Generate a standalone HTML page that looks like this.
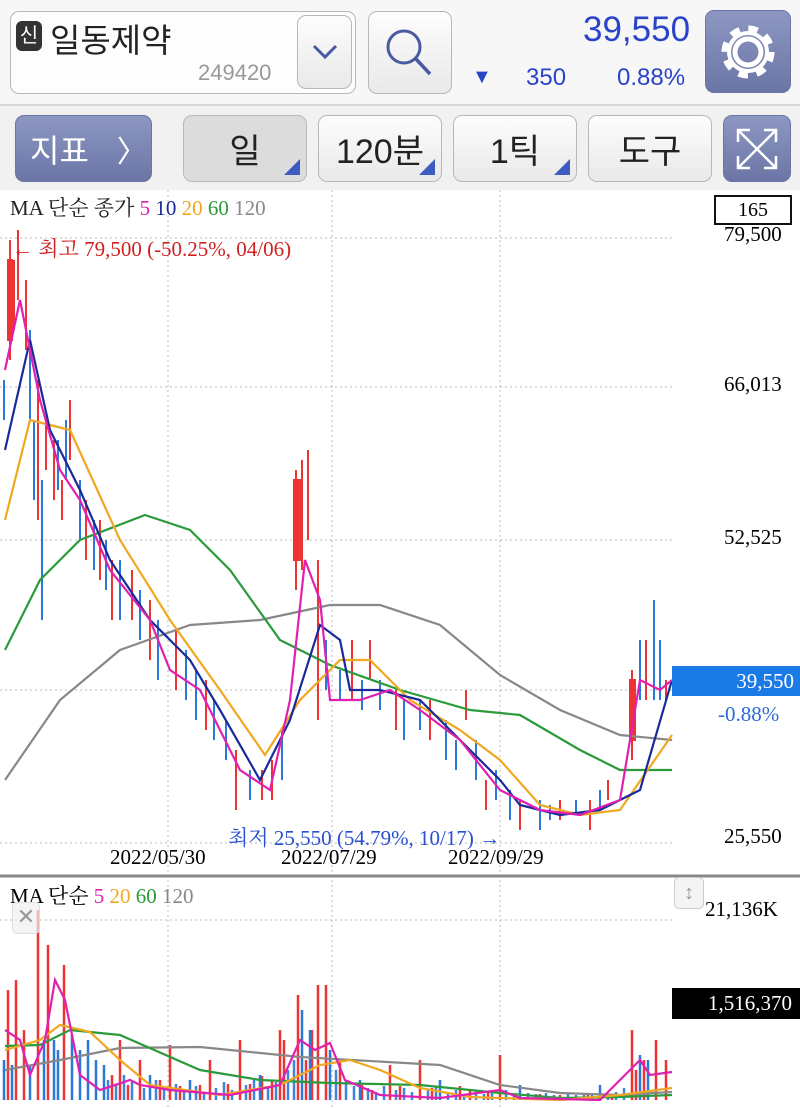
<!DOCTYPE html><html><head><meta charset="utf-8"><style>
body{margin:0;width:800px;height:1108px;overflow:hidden;background:#fff;font-family:"Liberation Sans","Noto Sans CJK KR",sans-serif;position:relative}
.a{position:absolute}
.btn{position:absolute;border:1px solid #b8b8b8;border-radius:9px;background:linear-gradient(#fdfdfd,#e9e9e9);box-sizing:border-box;display:flex;align-items:center;justify-content:center;font-size:34px;color:#222}
.blue{background:linear-gradient(#8d97c2,#6b76a6);border-color:#6b76a6;color:#fff}
.tri{position:absolute;right:6px;bottom:6px;width:0;height:0;border-left:16px solid transparent;border-bottom:16px solid #3d5cc0}
.s{font-family:"Liberation Serif","Noto Serif CJK SC",serif}
</style></head><body>
<div class="a" style="left:0;top:0;width:800px;height:104px;background:#f7f7f7;border-bottom:2px solid #d8d8d8"></div>
<div class="a" style="left:0;top:106px;width:800px;height:84px;background:#f1f1f1"></div>
<div class="btn" style="left:10px;top:11px;width:346px;height:83px;background:#fdfdfd"></div>
<div class="a" style="left:16px;top:21px;width:26px;height:30px;background:#333;border-radius:6px;color:#fff;font-size:20px;text-align:center;line-height:30px">신</div>
<div class="a" style="left:50px;top:14px;font-size:33px;color:#222">일동제약</div>
<div class="a" style="left:198px;top:60px;font-size:22px;color:#999">249420</div>
<div class="btn" style="left:297px;top:15px;width:55px;height:74px"><svg width="30" height="20"><path d="M4 4 L15 15 L26 4" stroke="#4a5aa0" stroke-width="3" fill="none"/></svg></div>
<div class="btn" style="left:368px;top:11px;width:84px;height:83px"><svg width="60" height="60"><circle cx="24" cy="24" r="16" stroke="#4a5aa0" stroke-width="3" fill="none"/><path d="M36 36 L50 51" stroke="#4a5aa0" stroke-width="3.5"/></svg></div>
<div class="a" style="left:583px;top:10px;font-size:35px;color:#2a44c8">39,550</div>
<div class="a" style="left:472px;top:66px;font-size:20px;color:#2a44c8">▼</div>
<div class="a" style="left:526px;top:64px;font-size:24px;color:#2a44c8">350</div>
<div class="a" style="left:617px;top:64px;font-size:24px;color:#2a44c8">0.88%</div>
<div class="btn blue" style="left:705px;top:10px;width:86px;height:83px"><svg width="70" height="70" viewBox="0 0 70 70"><g fill="none" stroke="#fff" stroke-width="5"><circle cx="35" cy="35" r="13"/><circle cx="35" cy="35" r="22" stroke-dasharray="9 8.3" stroke-width="9"/></g><circle cx="35" cy="35" r="19" fill="none" stroke="#fff" stroke-width="4"/></svg></div>
<div class="btn blue" style="left:15px;top:115px;width:137px;height:67px;font-size:32px;justify-content:flex-start;padding-left:14px">지표 <span style="margin-left:28px;font-size:30px">〉</span></div>
<div class="btn" style="left:183px;top:115px;width:124px;height:67px;background:#dcdcdc">일<div class="tri"></div></div>
<div class="btn" style="left:318px;top:115px;width:124px;height:67px">120분<div class="tri"></div></div>
<div class="btn" style="left:453px;top:115px;width:124px;height:67px">1틱<div class="tri"></div></div>
<div class="btn" style="left:588px;top:115px;width:124px;height:67px">도구</div>
<div class="btn blue" style="left:723px;top:115px;width:68px;height:67px"><svg width="50" height="50"><g stroke="#fff" stroke-width="2.5" fill="none"><path d="M6 6L44 44M44 6L6 44M6 18V6H18M32 6H44V18M6 32V44H18M44 32V44H32"/></g></svg></div>

<svg class="a" style="left:0;top:190px" width="800" height="918">
<g stroke="#bbb" stroke-dasharray="2 3" stroke-width="1">
<line x1="168" y1="0" x2="168" y2="918"/><line x1="332" y1="0" x2="332" y2="918"/><line x1="500" y1="0" x2="500" y2="918"/>
<line x1="0" y1="48" x2="672" y2="48"/><line x1="0" y1="197" x2="672" y2="197"/><line x1="0" y1="350" x2="672" y2="350"/><line x1="0" y1="500" x2="672" y2="500"/><line x1="0" y1="653" x2="672" y2="653"/><line x1="0" y1="730" x2="672" y2="730"/>
</g>
<line x1="0" y1="686" x2="800" y2="686" stroke="#888" stroke-width="3"/>
<g transform="translate(0,-190)" stroke-width="2">
<g stroke="#e33">
<path d="M10 240V360M14 260V330M18 230V300M26 280V350M38 380V520M46 420V470M54 440V500M62 480V520M70 400V460M86 500V560M100 520V580M112 560V620M132 570V620M150 600V660M176 630V690M206 680V730M236 750V810M262 770V800M272 760V800M296 470V590M302 460V570M308 450V540M318 560V720M352 640V700M370 640V680M396 690V730M430 700V740M466 690V720M486 780V810M520 800V830M560 800V820M590 800V830M608 780V800M632 670V760M646 640V700M666 680V700"/>
<rect x="8" y="260" width="4" height="80" fill="#e33"/><rect x="294" y="480" width="6" height="80" fill="#e33"/><rect x="630" y="680" width="5" height="60" fill="#e33"/>
</g>
<g stroke="#2a78d8">
<path d="M4 380V420M30 330V420M34 420V500M42 480V620M58 440V490M66 420V480M80 480V540M94 520V570M106 540V590M120 560V620M140 590V640M158 620V680M186 650V700M196 670V720M214 700V740M226 720V760M250 770V800M282 730V780M326 640V690M340 670V700M362 680V710M380 680V710M404 700V740M420 700V730M446 720V760M456 740V770M476 740V780M496 770V800M510 790V820M540 800V830M550 805V820M576 800V815M600 790V810M640 640V700M654 600V700M660 640V700"/>
</g>
</g>
<g fill="none" stroke-width="2.2" transform="translate(0,-190)">
<polyline stroke="#888" points="5,780 60,700 120,650 190,625 260,620 330,605 380,605 440,625 500,675 560,710 620,735 672,740"/>
<polyline stroke="#2a9a3a" points="5,650 40,580 80,540 145,515 190,530 230,570 280,640 330,665 400,690 470,710 520,715 580,750 620,770 672,770"/>
<polyline stroke="#f0a820" points="5,520 30,420 70,430 120,540 170,620 220,690 265,755 300,700 340,660 370,660 410,700 460,730 500,760 540,805 580,815 620,810 672,735"/>
<polyline stroke="#1a2a9a" points="5,450 30,340 50,430 80,490 110,560 150,620 190,660 220,710 260,780 290,720 320,625 340,640 350,690 380,690 420,700 460,740 500,780 520,805 560,815 600,810 640,790 672,680"/>
<polyline stroke="#e020b0" points="5,370 20,300 40,400 60,470 80,500 110,570 150,620 170,670 200,690 240,770 270,790 290,700 305,560 320,600 330,700 360,700 390,690 420,710 460,740 500,790 540,810 580,815 620,800 640,680 660,690 672,680"/>
</g>
<g transform="translate(0,-190)">
<g stroke-width="2.5">
<path stroke="#2a78d8" opacity="0.9" d="M108 1100V1080M116 1100V1085M124 1100V1075M132 1100V1082M144 1100V1088M156 1100V1080M164 1100V1090M176 1100V1084M184 1100V1090M196 1100V1086M204 1100V1092M216 1100V1088M224 1100V1082M232 1100V1090M246 1100V1085M254 1100V1080M268 1100V1086M276 1100V1082M288 1100V1070M294 1100V1060M336 1100V1070M346 1100V1080M354 1100V1086M368 1100V1088M376 1100V1092M384 1100V1086M396 1100V1090M404 1100V1088M412 1100V1092M428 1100V1090M436 1100V1086M448 1100V1092M456 1100V1090M464 1100V1094M476 1100V1090M484 1100V1094M492 1100V1092M506 1100V1090M514 1100V1094M528 1100V1093M536 1100V1094M546 1100V1093M554 1100V1095M568 1100V1094M576 1100V1095M584 1100V1094M592 1100V1095M608 1100V1094M616 1100V1092M624 1100V1088"/>
<path stroke="#e33" d="M8 1100V990M16 1100V980M24 1100V1030M38 1100V910M48 1100V945M64 1100V965M120 1100V1040M140 1100V1060M170 1100V1045M210 1100V1060M240 1100V1040M280 1100V1030M298 1100V995M318 1100V985M326 1100V985M340 1100V1060M390 1100V1065M420 1100V1060M500 1100V1055M632 1100V1030M656 1100V1040M666 1100V1060M112 1100V1075M128 1100V1085M160 1100V1080M180 1100V1086M200 1100V1085M228 1100V1084M250 1100V1084M262 1100V1076M272 1100V1080M284 1100V1040M306 1100V1060M312 1100V1030M362 1100V1085M372 1100V1090M400 1100V1086M432 1100V1088M460 1100V1086M470 1100V1090M488 1100V1092M520 1100V1094M540 1100V1094M560 1100V1095M588 1100V1095M612 1100V1094M636 1100V1070M644 1100V1060"/>
<path stroke="#2a78d8" d="M4 1100V1060M12 1100V1065M30 1100V1065M44 1100V1040M54 1100V1040M58 1100V1050M72 1100V1035M80 1100V1050M88 1100V1040M96 1100V1060M104 1100V1065M150 1100V1075M190 1100V1080M260 1100V1075M302 1100V1010M310 1100V1030M330 1100V1050M360 1100V1080M440 1100V1080M520 1100V1085M600 1100V1085M640 1100V1055M648 1100V1060"/>
</g>
<g fill="none" stroke-width="2.2">
<polyline stroke="#888" points="5,1070 60,1060 120,1048 200,1047 300,1057 440,1065 500,1085 560,1093 620,1095 672,1092"/>
<polyline stroke="#2a9a3a" points="5,1046 40,1045 70,1030 120,1035 200,1070 260,1080 330,1083 420,1085 500,1093 560,1098 620,1097 672,1095"/>
<polyline stroke="#f0a820" points="5,1050 40,1040 60,1025 90,1032 120,1060 150,1085 220,1095 280,1085 320,1065 350,1060 380,1070 420,1088 470,1097 560,1100 620,1095 672,1088"/>
<polyline stroke="#e020b0" points="5,1030 20,1040 30,1075 45,1040 55,980 65,1000 80,1075 100,1090 130,1080 140,1085 170,1090 230,1095 280,1085 300,1040 315,1050 330,1043 345,1080 380,1095 440,1098 500,1090 520,1098 600,1100 630,1070 640,1060 650,1075 672,1072"/>
</g>
</g>
</svg>

<div class="a s" style="left:10px;top:192px;font-size:21px;color:#222">MA 단순 종가 <span style="color:#e020b0">5</span> <span style="color:#1a2a9a">10</span> <span style="color:#f0a820">20</span> <span style="color:#2a9a3a">60</span> <span style="color:#888">120</span></div>
<div class="a s" style="left:12px;top:233px;font-size:21px;color:#d02020">← 최고 79,500 (-50.25%, 04/06)</div>
<div class="a s" style="left:228px;top:822px;font-size:21px;color:#2a50d0">최저 25,550 (54.79%, 10/17) →</div>
<div class="a s" style="left:714px;top:195px;width:74px;height:26px;border:2px solid #111;font-size:20px;text-align:center;line-height:26px">165</div>
<div class="a s" style="left:724px;top:222px;font-size:21px">79,500</div>
<div class="a s" style="left:724px;top:372px;font-size:21px">66,013</div>
<div class="a s" style="left:724px;top:525px;font-size:21px">52,525</div>
<div class="a s" style="left:672px;top:666px;width:128px;height:30px;background:#1a7ae6;color:#fff;font-size:21px;line-height:30px;text-align:right;box-sizing:border-box;padding-right:6px">39,550</div>
<div class="a s" style="left:718px;top:702px;font-size:21px;color:#2a6ad8">-0.88%</div>
<div class="a s" style="left:724px;top:824px;font-size:21px">25,550</div>
<div class="a s" style="left:110px;top:845px;font-size:21px">2022/05/30</div>
<div class="a s" style="left:281px;top:845px;font-size:21px">2022/07/29</div>
<div class="a s" style="left:448px;top:845px;font-size:21px">2022/09/29</div>
<div class="a s" style="left:10px;top:880px;font-size:21px">MA 단순 <span style="color:#e020b0">5</span> <span style="color:#f0a820">20</span> <span style="color:#2a9a3a">60</span> <span style="color:#888">120</span></div>
<div class="a" style="left:12px;top:902px;width:26px;height:30px;border:1px solid #ddd;border-radius:5px;background:rgba(240,240,240,.7);color:#999;text-align:center;font-size:22px;line-height:28px">✕</div>
<div class="a" style="left:674px;top:877px;width:28px;height:30px;border:1px solid #ccc;border-radius:5px;background:#f4f4f4;color:#999;text-align:center;font-size:20px;line-height:30px">↕</div>
<div class="a s" style="left:705px;top:897px;font-size:21px">21,136K</div>
<div class="a s" style="left:672px;top:988px;width:128px;height:31px;background:#000;color:#fff;font-size:21px;line-height:31px;text-align:right;box-sizing:border-box;padding-right:8px">1,516,370</div>
</body></html>
